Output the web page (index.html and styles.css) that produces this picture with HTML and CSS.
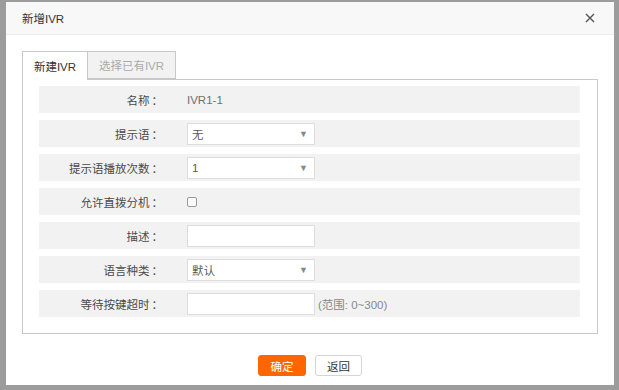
FILE: index.html
```html
<!DOCTYPE html>
<html lang="zh-CN">
<head>
    <meta charset="UTF-8">
    <title>新增IVR</title>
    <link rel="stylesheet" href="styles.css">
</head>
<body>
    <div class="dialog">
        <!-- 标题栏 -->
        <div class="dialog-header">
            <span class="dialog-title">新增IVR</span>
            <span class="close-btn">
                <svg width="10" height="10" viewBox="0 0 10 10">
                    <path d="M1 1L9 9M9 1L1 9" stroke="#555" stroke-width="1.4" fill="none"/>
                </svg>
            </span>
        </div>

        <div class="dialog-body">
            <div class="tabs">
                <div class="tab active">新建IVR</div>
                <div class="tab">选择已有IVR</div>
            </div>

            <div class="tab-panel">
                <div class="form-row">
                    <label>名称<span class="colon">：</span></label>
                    <span class="value">IVR1-1</span>
                </div>
                <div class="form-row">
                    <label>提示语<span class="colon">：</span></label>
                    <div class="select">无<span class="arrow">▼</span></div>
                </div>
                <div class="form-row">
                    <label>提示语播放次数<span class="colon">：</span></label>
                    <div class="select">1<span class="arrow">▼</span></div>
                </div>
                <div class="form-row">
                    <label>允许直拨分机<span class="colon">：</span></label>
                    <input type="checkbox" class="check">
                </div>
                <div class="form-row">
                    <label>描述<span class="colon">：</span></label>
                    <input type="text" class="text-input">
                </div>
                <div class="form-row">
                    <label>语言种类<span class="colon">：</span></label>
                    <div class="select">默认<span class="arrow">▼</span></div>
                </div>
                <div class="form-row">
                    <label>等待按键超时<span class="colon">：</span></label>
                    <input type="text" class="text-input">
                    <span class="hint">(范围: 0~300)</span>
                </div>
            </div>

            <div class="dialog-footer">
                <button class="btn btn-primary">确定</button>
                <button class="btn">返回</button>
            </div>
        </div>
    </div>
</body>
</html>
```

FILE: styles.css
```css
* {
    margin: 0;
    padding: 0;
    box-sizing: border-box;
}

body {
    font-family: "Liberation Sans", "Noto Sans CJK SC", sans-serif;
    font-size: 11.5px;
    color: #333;
    background-color: #9c9c9c;
    width: 619px;
    height: 390px;
    overflow: hidden;
}

.dialog {
    margin: 2px 0 0 6px;
    width: 608px;
    height: 383px;
    background-color: #fff;
}

.dialog-header {
    height: 33px;
    display: flex;
    align-items: center;
    justify-content: space-between;
    padding: 0 19px 0 16px;
    background-color: #f8f8f8;
    border-bottom: 1px solid #ececec;
}

.dialog-title {
    color: #333;
}

.close-btn {
    display: flex;
    align-items: center;
}

.dialog-body {
    padding: 16px 16px 0 16px;
}

/* 选项卡 */
.tabs {
    display: flex;
    height: 29px;
    margin-bottom: -1px;
}

.tab {
    display: flex;
    align-items: center;
    justify-content: center;
    height: 28px;
    width: 88px;
    white-space: nowrap;
    border: 1px solid #c8c8c8;
    background-color: #f2f2f2;
    color: #aaa;
}

.tab.active {
    width: 66px;
    height: 29px;
    background-color: #fff;
    color: #333;
    border-bottom: none;
    position: relative;
    z-index: 1;
}

.tab + .tab {
    border-left: none;
}

.tab-panel {
    border: 1px solid #c8c8c8;
    padding: 6px 17px 16px 16px;
    display: flex;
    flex-direction: column;
    gap: 7px;
}

.form-row {
    height: 27px;
    display: flex;
    align-items: center;
    background-color: #f2f2f2;
}

.form-row label {
    width: 124px;
    text-align: right;
    margin-right: 24px;
    color: #4a4a4a;
    white-space: nowrap;
}

.colon {
    font-family: "Noto Sans CJK TC", sans-serif;
    margin-left: 2px;
}

.value {
    color: #707070;
}

.select,
.text-input {
    width: 128px;
    height: 22px;
    border: 1px solid #ddd;
    background-color: #fff;
    font: inherit;
    color: #5a5a5a;
}

.select {
    display: flex;
    align-items: center;
    justify-content: space-between;
    padding: 0 6px 0 4px;
}

.arrow {
    font-size: 9px;
    color: #888;
}

.check {
    appearance: none;
    width: 10px;
    height: 10px;
    border: 1px solid #9a9a9a;
    border-radius: 2px;
    background-color: #fafafa;
}

.hint {
    margin-left: 3px;
    color: #888;
}

.dialog-footer {
    display: flex;
    justify-content: center;
    gap: 9px;
    margin-top: 21px;
}

.btn {
    width: 47px;
    height: 21px;
    border: 1px solid #d5d5d5;
    border-radius: 3px;
    background-color: #fff;
    font: inherit;
    color: #333;
}

.btn-primary {
    width: 48px;
    border-color: #ff6600;
    background-color: #ff6600;
    color: #fff;
}
```
